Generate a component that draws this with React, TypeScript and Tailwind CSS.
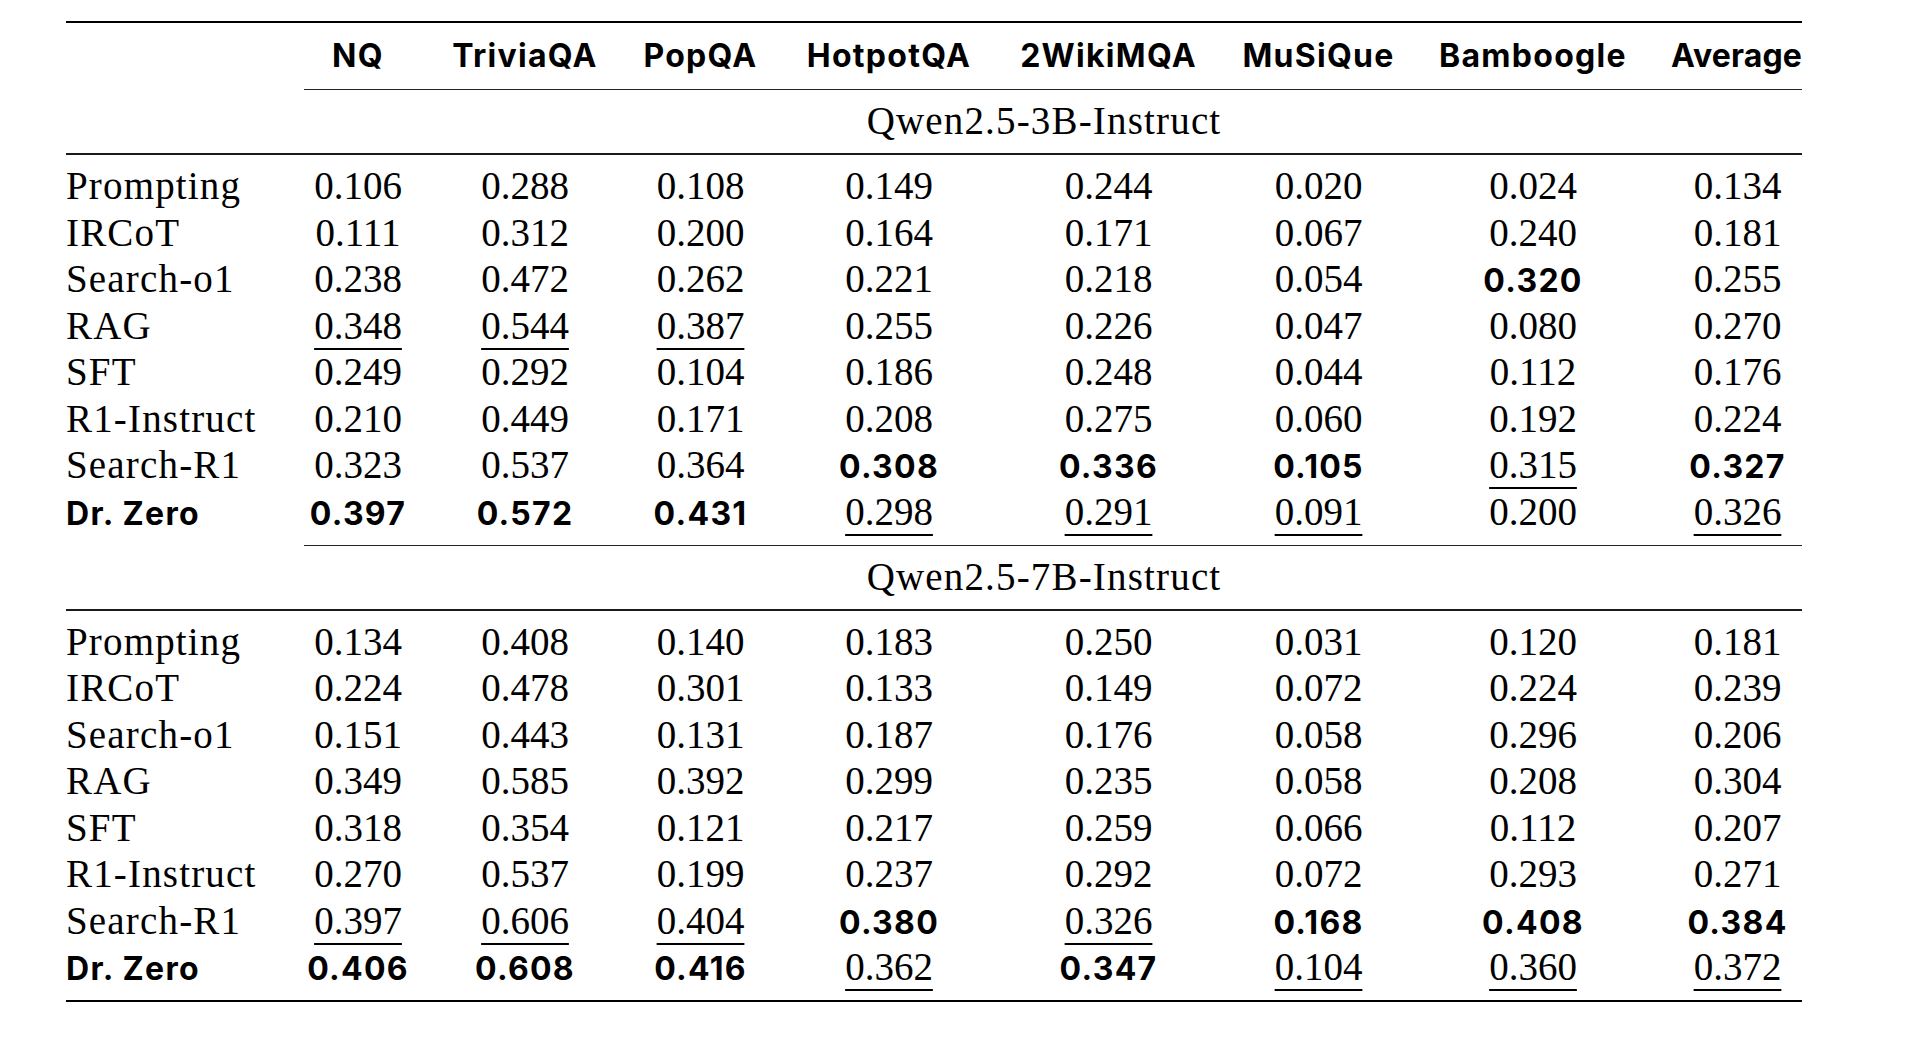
import React from "react";

const headers = ["NQ", "TriviaQA", "PopQA", "HotpotQA", "2WikiMQA", "MuSiQue", "Bamboogle", "Average"];

// "b:" = bold best, "u:" = underlined second best
const blocks = [
  {
    model: "Qwen2.5-3B-Instruct",
    rows: [
      ["Prompting", "0.106", "0.288", "0.108", "0.149", "0.244", "0.020", "0.024", "0.134"],
      ["IRCoT", "0.111", "0.312", "0.200", "0.164", "0.171", "0.067", "0.240", "0.181"],
      ["Search-o1", "0.238", "0.472", "0.262", "0.221", "0.218", "0.054", "b:0.320", "0.255"],
      ["RAG", "u:0.348", "u:0.544", "u:0.387", "0.255", "0.226", "0.047", "0.080", "0.270"],
      ["SFT", "0.249", "0.292", "0.104", "0.186", "0.248", "0.044", "0.112", "0.176"],
      ["R1-Instruct", "0.210", "0.449", "0.171", "0.208", "0.275", "0.060", "0.192", "0.224"],
      ["Search-R1", "0.323", "0.537", "0.364", "b:0.308", "b:0.336", "b:0.105", "u:0.315", "b:0.327"],
      ["b:Dr. Zero", "b:0.397", "b:0.572", "b:0.431", "u:0.298", "u:0.291", "u:0.091", "0.200", "u:0.326"],
    ],
  },
  {
    model: "Qwen2.5-7B-Instruct",
    rows: [
      ["Prompting", "0.134", "0.408", "0.140", "0.183", "0.250", "0.031", "0.120", "0.181"],
      ["IRCoT", "0.224", "0.478", "0.301", "0.133", "0.149", "0.072", "0.224", "0.239"],
      ["Search-o1", "0.151", "0.443", "0.131", "0.187", "0.176", "0.058", "0.296", "0.206"],
      ["RAG", "0.349", "0.585", "0.392", "0.299", "0.235", "0.058", "0.208", "0.304"],
      ["SFT", "0.318", "0.354", "0.121", "0.217", "0.259", "0.066", "0.112", "0.207"],
      ["R1-Instruct", "0.270", "0.537", "0.199", "0.237", "0.292", "0.072", "0.293", "0.271"],
      ["Search-R1", "u:0.397", "u:0.606", "u:0.404", "b:0.380", "u:0.326", "b:0.168", "b:0.408", "b:0.384"],
      ["b:Dr. Zero", "b:0.406", "b:0.608", "b:0.416", "u:0.362", "b:0.347", "u:0.104", "u:0.360", "u:0.372"],
    ],
  },
];

const cols =
  "grid grid-cols-[220px_144px_190px_161px_216px_223px_197px_232px_153px]";

const serif = "font-['Liberation_Serif',serif] text-[39px]";
const sansBase = "font-['Inter',sans-serif] text-[32px] font-bold";
const sans = `${sansBase} tracking-[0.04em]`;

function Cell({ value, first, last }: { value: string; first?: boolean; last?: boolean }) {
  const bold = value.startsWith("b:");
  const under = value.startsWith("u:");
  const text = bold || under ? value.slice(2) : value;
  const align = first ? "text-left" : last ? "pl-6 text-center" : "text-center";
  return (
    <div className={`${align} leading-[46.57px] whitespace-nowrap`}>
      <span
        className={
          bold
            ? sans
            : `${serif} ${first ? "tracking-[0.03em]" : ""} ${
                under ? "underline decoration-[1.5px] underline-offset-[9px]" : ""
              }`
        }
      >
        {text}
      </span>
    </div>
  );
}

export default function App() {
  return (
    <div className="min-h-screen w-full bg-white text-black">
      <div className="ml-[66px] w-[1736px] pt-[21px]">
        <div className="h-[2px] bg-black" />
        <div className={`${cols} h-[66px] items-center`}>
          <div />
          {headers.map((h, i) =>
            i === headers.length - 1 ? (
              <div key={h} className={`${sansBase} tracking-[0.005em] whitespace-nowrap text-right`}>
                {h}
              </div>
            ) : (
              <div key={h} className={`${sans} whitespace-nowrap text-center`}>
                {h}
              </div>
            )
          )}
        </div>
        {blocks.map((block) => (
          <div key={block.model}>
            <div className="ml-[238px] h-px bg-[#222]" />
            <div className="flex h-[63px] items-center pl-[220px]">
              <div className={`${serif} w-full text-center tracking-[0.03em]`}>{block.model}</div>
            </div>
            <div className="h-[2px] bg-[#1a1a1a]" />
            <div className="flex flex-col pt-2 pb-[9px]">
              {block.rows.map((row) => (
                <div key={row[0]} className={`${cols} h-[46.57px] items-baseline`}>
                  {row.map((v, ci) => (
                    <Cell key={ci} value={v} first={ci === 0} last={ci === row.length - 1} />
                  ))}
                </div>
              ))}
            </div>
          </div>
        ))}
        <div className="h-[2px] bg-black" />
      </div>
    </div>
  );
}
